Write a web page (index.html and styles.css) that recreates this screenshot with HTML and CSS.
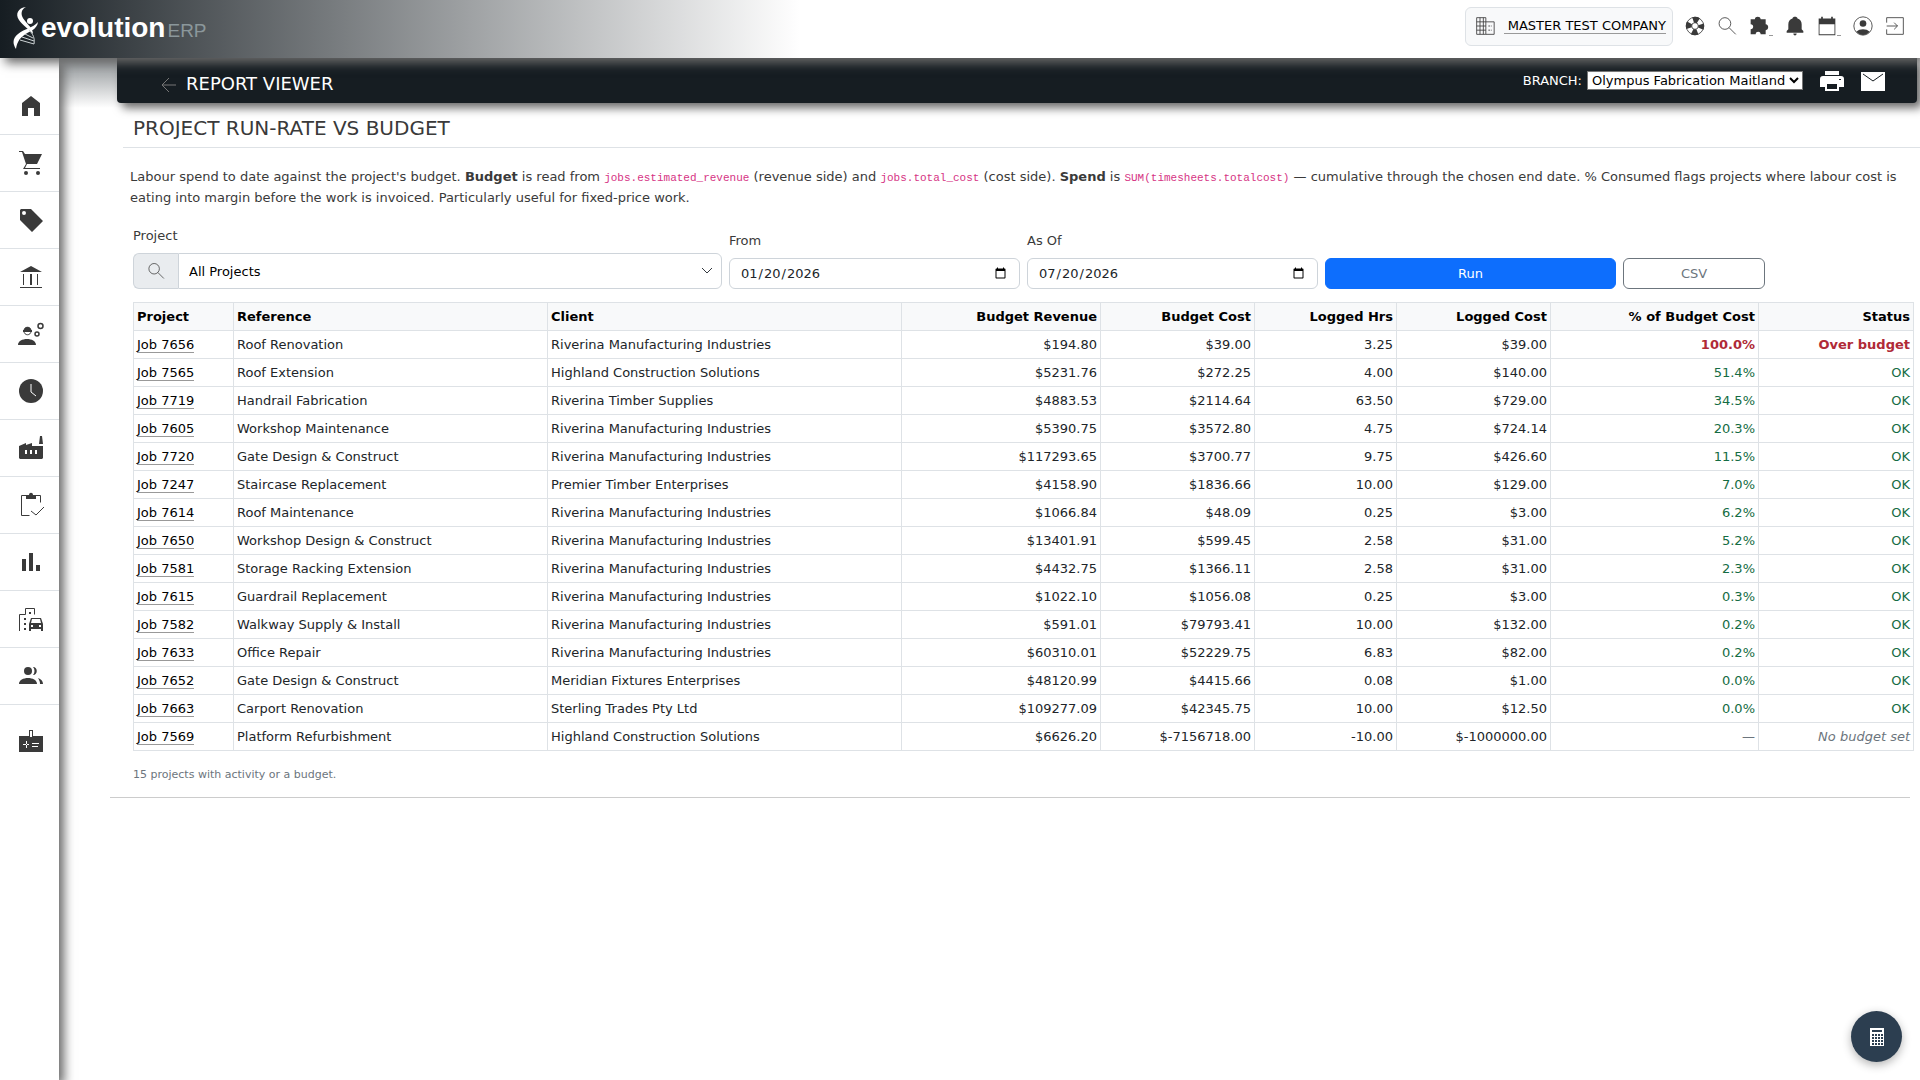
FILE: index.html
```html
<!DOCTYPE html>
<html lang="en">
<head>
  <meta charset="UTF-8">
  <meta name="viewport" content="width=device-width, initial-scale=1.0">
  <title>Project Run-Rate vs Budget - Evolution ERP</title>
  <link rel="stylesheet" href="styles.css">
</head>
<body>

<header class="topbar">
  <a href="#" class="logo" aria-label="Evolution ERP">
    <svg class="logo-mark" viewBox="0 0 26 42" aria-hidden="true">
      <path d="M13 0C5 1 2 7 6 13c3 5 10 9 14 14 0-7-9-12-11-18-1-4 0-7 4-9z" fill="#fff"/>
      <path d="M25 15c-1 8-9 9-15 14-4 3-6 7-7 13C-1 36 0 31 5 27c6-5 15-6 20-12z" fill="#fff"/>
      <circle cx="17" cy="14" r="3" fill="#fff"/>
      <path d="M16 23c4 4 6 8 5 14L7 33M9 30l12 4M12 27l8 4" fill="none" stroke="#ccd2d4" stroke-width="1"/>
    </svg>
    <span class="logo-name">evolution</span><span class="logo-erp">ERP</span>
  </a>
  <nav class="tools">
    <a href="#" class="company">
      <svg viewBox="0 0 24 24"><path d="M2 2h11v20H2zM2 7h11M2 12h11M2 17h11M6 2v20M10 2v20M13 7h10v15H13M16 12h2M19 12h1M16 17h2M19 17h1" fill="none" stroke="#3a3a3a"/></svg>
      <span>&nbsp;MASTER TEST COMPANY</span>
    </a>
    <a href="#" class="tool" aria-label="Help"><svg viewBox="0 0 24 24"><circle cx="12" cy="12" r="7.5" fill="none" stroke="#3a3a3a" stroke-width="7" stroke-dasharray="6.500 5.280" stroke-dashoffset="3.250"/><circle cx="12" cy="12" r="10.5" fill="none" stroke="#3a3a3a"/><circle cx="12" cy="12" r="4" fill="none" stroke="#3a3a3a"/></svg></a>
    <a href="#" class="tool" aria-label="Search"><svg viewBox="0 0 24 24"><circle cx="9.500" cy="9" r="7" fill="none" stroke="#3a3a3a"/><path d="M14.500 14l8 8" stroke="#3a3a3a"/></svg></a>
    <a href="#" class="tool more" aria-label="Plugins"><svg viewBox="0 0 24 24"><path d="M2 4h5c0-4 7-4 7 0h6v6c4 0 4 7 0 7v5h-6c0-4-6-4-6 0H2v-6c4 0 4-6 0-6z"/></svg></a>
    <a href="#" class="tool" aria-label="Notifications"><svg viewBox="0 0 24 24"><path d="M2 20v-2l2-2v-6c0-4 2-6 5-7 0-3 6-3 6 0 3 1 5 3 5 7v6l2 2v2zM10 21h4c0 3-4 3-4 0z"/></svg></a>
    <a href="#" class="tool more" aria-label="Calendar"><svg viewBox="0 0 24 24"><path d="M2 3h3V1h2v2h10V1h2v2h3v20H2zm1 7v12h18V10z" fill-rule="evenodd"/></svg></a>
    <a href="#" class="tool" aria-label="Account"><svg viewBox="0 0 24 24"><circle cx="12" cy="12" r="11" fill="none" stroke="#3a3a3a"/><circle cx="12" cy="9" r="4"/><path d="M4 19c4-4 12-4 16 0-4 5-12 5-16 0z"/></svg></a>
    <a href="#" class="tool" aria-label="Log out"><svg viewBox="0 0 24 24"><path d="M2 8V2h20v20H2v-6M2 12h13M11 8l4 4-4 4" fill="none" stroke="#3a3a3a"/></svg></a>
  </nav>
</header>

<div class="layout">
  <nav class="sidebar">
    <a href="#" aria-label="Home"><svg viewBox="0 0 24 24"><path d="M3 22V9l9-7 9 7v13h-6v-8H9v8z"/></svg></a>
    <a href="#" aria-label="Sales"><svg viewBox="0 0 24 24"><path d="M0 0h4l2 3h17l-5 10H8l-2 4h15v1H4l3-5L3 1H0z"/><circle cx="7" cy="22" r="2"/><circle cx="19" cy="22" r="2"/></svg></a>
    <a href="#" aria-label="Products"><svg viewBox="0 0 24 24"><path d="M2 1h10l12 12-11 11L1 12V2zm3 2a2 2 0 100 4 2 2 0 000-4z" fill-rule="evenodd"/></svg></a>
    <a href="#" aria-label="Accounts"><svg viewBox="0 0 24 24"><path d="M1 7l11-6 11 6zM4 9h1v11H4zM11 9h2v11h-2zM18 9h1v11h-1zM1 22h22v1H1z"/></svg></a>
    <a href="#" aria-label="Workforce"><svg viewBox="0 0 24 24"><path d="M-1 23c0-8 18-8 18 0zM4 8h9v2H4z"/><path d="M5 9c0-5 7-5 7 0M5 9c0 5 7 5 7 0" fill="none" stroke="#3a3a3a"/><path d="M5 8c0-4 7-4 7 0z"/><circle cx="21.500" cy="4" r="2.500" fill="none" stroke="#3a3a3a" stroke-width="1.500"/><circle cx="18" cy="12" r="2" fill="none" stroke="#3a3a3a" stroke-width="1.500"/></svg></a>
    <a href="#" aria-label="Timesheets"><svg viewBox="0 0 24 24"><circle cx="12" cy="12" r="12"/><path d="M12 5v8l5 4" fill="none" stroke="#fff"/></svg></a>
    <a href="#" aria-label="Manufacturing"><svg viewBox="0 0 24 24"><path d="M0 10l7-3v2l6-2v3h11v12l-1 1H1l-1-1zM20 8l1-8h2l1 8zM6 14v4h2v-4zm5 0v4h2v-4zm5 0v4h2v-4z" fill-rule="evenodd"/></svg></a>
    <a href="#" aria-label="Tasks"><svg viewBox="0 0 24 24"><path d="M10.500 22.500h-8v-20h19v7M12 18l5 4 8-8" fill="none" stroke="#3a3a3a"/><path d="M7 2h3c0-3 4-3 4 0h3v4H7z"/></svg></a>
    <a href="#" aria-label="Reports"><svg viewBox="0 0 24 24"><path d="M3 9h4v12H3zM10 3h4v18h-4zM17 15h4v6h-4z"/></svg></a>
    <a href="#" aria-label="Assets"><svg viewBox="0 0 24 24"><path d="M.5 24V7.500h6v-6h9v6" fill="none" stroke="#3a3a3a"/><path d="M5 11h2v2H5zM5 16h2v2H5zM5 21h2v2H5zM10 5h2v2h-2zM12 11h10l2 6v7h-2v-2H12v2h-2v-7zm1 1l-1 4h10l-1-4zM12 18v2h2v-2zm8 0v2h2v-2z" fill-rule="evenodd"/></svg></a>
    <a href="#" aria-label="Contacts"><svg viewBox="0 0 24 24"><circle cx="9" cy="7" r="4"/><path d="M0 20c0-8 18-8 18 0zM14 3c5 0 5 8 0 8 2-2 2-6 0-8zM19 14c3 1 5 3 5 6h-3c0-3-1-4-2-6z"/></svg></a>
    <a href="#" class="last" aria-label="Admin"><svg viewBox="0 0 24 24"><path d="M0 7h10V1h4v6h10v16H0zm11-5v6h2V2zM4 15h6v1H4zm3-3h1v7H7zM13 14h7v1h-7zm0 3h6v1h-6z" fill-rule="evenodd"/></svg></a>
  </nav>

  <main class="page">
    <div class="titlebar">
      <a href="#" class="back" aria-label="Back"><svg viewBox="0 0 16 16"><path d="M15 8H1M8 1L1 8l7 7" fill="none" stroke="currentColor"/></svg></a>
      <h1>REPORT VIEWER</h1>
      <label for="branch">BRANCH:</label>
      <select id="branch"><option>Olympus Fabrication Maitland</option></select>
      <button class="bar-button" aria-label="Print"><svg viewBox="0 0 24 24"><path d="M5 2h14v4H5zM3 7h18c2 0 3 1 3 3v8h-5v4H5v-4H0v-8c0-2 1-3 3-3zm4 8v5h10v-5zm12-5v1h2v-1z" fill-rule="evenodd"/></svg></button>
      <button class="bar-button" aria-label="Email"><svg viewBox="0 0 24 24"><path d="M0 3h24v19H0z"/><path d="M2 5l10 7 10-7" fill="none" stroke="#161d22"/></svg></button>
    </div>

    <h2>PROJECT RUN-RATE VS BUDGET</h2>

    <p class="intro">Labour spend to date against the project's budget. <strong>Budget</strong> is read from <code>jobs.estimated_revenue</code> (revenue side) and <code>jobs.total_cost</code> (cost side). <strong>Spend</strong> is <code>SUM(timesheets.totalcost)</code> — cumulative through the chosen end date. % Consumed flags projects where labour cost is eating into margin before the work is invoiced. Particularly useful for fixed-price work.</p>

    <form class="filters">
      <div class="field wide">
        <label for="project">Project</label>
        <div class="input-group">
          <span class="addon"><svg viewBox="0 0 24 24"><circle cx="9.500" cy="9" r="7" fill="none" stroke="#3a3a3a"/><path d="M14.500 14l8 8" stroke="#3a3a3a"/></svg></span>
          <select id="project"><option>All Projects</option></select>
        </div>
      </div>
      <div class="field">
        <label for="from">From</label>
        <input type="date" id="from" value="2026-01-20">
      </div>
      <div class="field">
        <label for="asof">As Of</label>
        <input type="date" id="asof" value="2026-07-20">
      </div>
      <button type="button" class="btn run">Run</button>
      <button type="button" class="btn csv">CSV</button>
    </form>

    <table class="report">
      <colgroup><col class="c-job"><col class="c-ref"><col class="c-client"><col class="c-rev"><col class="c-cost"><col class="c-hrs"><col class="c-logged"><col class="c-pct"><col class="c-status"></colgroup>
      <thead>
        <tr><th>Project</th><th>Reference</th><th>Client</th><th class="num">Budget Revenue</th><th class="num">Budget Cost</th><th class="num">Logged Hrs</th><th class="num">Logged Cost</th><th class="num">% of Budget Cost</th><th class="num">Status</th></tr>
      </thead>
      <tbody>
        <tr><td><a href="#">Job 7656</a></td><td>Roof Renovation</td><td>Riverina Manufacturing Industries</td><td class="num">$194.80</td><td class="num">$39.00</td><td class="num">3.25</td><td class="num">$39.00</td><td class="num over">100.0%</td><td class="num over">Over budget</td></tr>
        <tr><td><a href="#">Job 7565</a></td><td>Roof Extension</td><td>Highland Construction Solutions</td><td class="num">$5231.76</td><td class="num">$272.25</td><td class="num">4.00</td><td class="num">$140.00</td><td class="num ok">51.4%</td><td class="num ok">OK</td></tr>
        <tr><td><a href="#">Job 7719</a></td><td>Handrail Fabrication</td><td>Riverina Timber Supplies</td><td class="num">$4883.53</td><td class="num">$2114.64</td><td class="num">63.50</td><td class="num">$729.00</td><td class="num ok">34.5%</td><td class="num ok">OK</td></tr>
        <tr><td><a href="#">Job 7605</a></td><td>Workshop Maintenance</td><td>Riverina Manufacturing Industries</td><td class="num">$5390.75</td><td class="num">$3572.80</td><td class="num">4.75</td><td class="num">$724.14</td><td class="num ok">20.3%</td><td class="num ok">OK</td></tr>
        <tr><td><a href="#">Job 7720</a></td><td>Gate Design &amp; Construct</td><td>Riverina Manufacturing Industries</td><td class="num">$117293.65</td><td class="num">$3700.77</td><td class="num">9.75</td><td class="num">$426.60</td><td class="num ok">11.5%</td><td class="num ok">OK</td></tr>
        <tr><td><a href="#">Job 7247</a></td><td>Staircase Replacement</td><td>Premier Timber Enterprises</td><td class="num">$4158.90</td><td class="num">$1836.66</td><td class="num">10.00</td><td class="num">$129.00</td><td class="num ok">7.0%</td><td class="num ok">OK</td></tr>
        <tr><td><a href="#">Job 7614</a></td><td>Roof Maintenance</td><td>Riverina Manufacturing Industries</td><td class="num">$1066.84</td><td class="num">$48.09</td><td class="num">0.25</td><td class="num">$3.00</td><td class="num ok">6.2%</td><td class="num ok">OK</td></tr>
        <tr><td><a href="#">Job 7650</a></td><td>Workshop Design &amp; Construct</td><td>Riverina Manufacturing Industries</td><td class="num">$13401.91</td><td class="num">$599.45</td><td class="num">2.58</td><td class="num">$31.00</td><td class="num ok">5.2%</td><td class="num ok">OK</td></tr>
        <tr><td><a href="#">Job 7581</a></td><td>Storage Racking Extension</td><td>Riverina Manufacturing Industries</td><td class="num">$4432.75</td><td class="num">$1366.11</td><td class="num">2.58</td><td class="num">$31.00</td><td class="num ok">2.3%</td><td class="num ok">OK</td></tr>
        <tr><td><a href="#">Job 7615</a></td><td>Guardrail Replacement</td><td>Riverina Manufacturing Industries</td><td class="num">$1022.10</td><td class="num">$1056.08</td><td class="num">0.25</td><td class="num">$3.00</td><td class="num ok">0.3%</td><td class="num ok">OK</td></tr>
        <tr><td><a href="#">Job 7582</a></td><td>Walkway Supply &amp; Install</td><td>Riverina Manufacturing Industries</td><td class="num">$591.01</td><td class="num">$79793.41</td><td class="num">10.00</td><td class="num">$132.00</td><td class="num ok">0.2%</td><td class="num ok">OK</td></tr>
        <tr><td><a href="#">Job 7633</a></td><td>Office Repair</td><td>Riverina Manufacturing Industries</td><td class="num">$60310.01</td><td class="num">$52229.75</td><td class="num">6.83</td><td class="num">$82.00</td><td class="num ok">0.2%</td><td class="num ok">OK</td></tr>
        <tr><td><a href="#">Job 7652</a></td><td>Gate Design &amp; Construct</td><td>Meridian Fixtures Enterprises</td><td class="num">$48120.99</td><td class="num">$4415.66</td><td class="num">0.08</td><td class="num">$1.00</td><td class="num ok">0.0%</td><td class="num ok">OK</td></tr>
        <tr><td><a href="#">Job 7663</a></td><td>Carport Renovation</td><td>Sterling Trades Pty Ltd</td><td class="num">$109277.09</td><td class="num">$42345.75</td><td class="num">10.00</td><td class="num">$12.50</td><td class="num ok">0.0%</td><td class="num ok">OK</td></tr>
        <tr><td><a href="#">Job 7569</a></td><td>Platform Refurbishment</td><td>Highland Construction Solutions</td><td class="num">$6626.20</td><td class="num">$-7156718.00</td><td class="num">-10.00</td><td class="num">$-1000000.00</td><td class="num none">—</td><td class="num none"><em>No budget set</em></td></tr>
      </tbody>
    </table>

    <p class="count">15 projects with activity or a budget.</p>
    <hr>
  </main>
</div>

<button class="calc" aria-label="Calculator">
  <svg viewBox="0 0 14 18"><path d="M0 0h14v18H0z" fill="#fff"/><path d="M2 2h10v2H2z" fill="#2c3e50"/><path d="M2 7h11M2 10h11M2 13h11M2 16h11" stroke="#2c3e50" stroke-width="2" stroke-dasharray="2 1"/></svg>
</button>

</body>
</html>
```

FILE: styles.css
```css
* {
  box-sizing: border-box;
}
body {
  margin: 0;
  background: #fff;
  color: #3a3a3a;
  font-family: "DejaVu Sans", sans-serif;
  font-size: 13px;
}
svg {
  display: block;
  fill: #3a3a3a;
}

/* top bar */
.topbar {
  position: relative;
  z-index: 3;
  display: flex;
  align-items: center;
  justify-content: space-between;
  height: 58px;
  padding: 0 15px 6px 13px;
  background: linear-gradient(90deg, #161d22 0, #fff 800px);
  box-shadow: 5px 5px 10px #686868;
}
.logo {
  display: flex;
  align-items: center;
  padding-top: 4px;
  color: #fff;
  text-decoration: none;
  font-family: "Liberation Sans", sans-serif;
  font-size: 28px;
}
.logo-mark {
  width: 26px;
  height: 42px;
  margin-right: 2px;
}
.logo-name {
  font-weight: bold;
}
.logo-erp {
  padding: 5px 0 0 2px;
  color: #8b979b;
  font-size: 19px;
}
.tools {
  display: flex;
  align-items: center;
  gap: 12px;
}
.company {
  display: flex;
  align-items: center;
  gap: 9px;
  height: 39px;
  padding: 0 6px 0 9px;
  border: 1px solid #dee2e6;
  border-radius: 6px;
  background: #f8f9fa;
  color: #000;
  text-decoration: none;
}
.company svg,
.tool svg {
  width: 20px;
  height: 20px;
}
.company span {
  border-bottom: 1px solid #999;
}
.tool {
  display: flex;
  align-items: flex-end;
}
.more::after {
  content: "";
  width: 4px;
  border-bottom: 1px solid #999;
}

/* side menu */
.layout {
  display: flex;
}
.sidebar {
  position: relative;
  z-index: 2;
  flex: 0 0 59px;
  min-height: calc(100vh - 58px);
  padding-top: 20px;
  background: #fff;
  box-shadow: 5px 5px 10px #686868;
}
.sidebar a {
  display: flex;
  align-items: center;
  justify-content: center;
  height: 57px;
  padding-left: 3px;
  border-bottom: 1px solid #dee2e6;
}
.sidebar a.last {
  height: 72px;
  border-bottom: 0;
}
.sidebar svg {
  width: 24px;
  height: 24px;
  overflow: visible;
}

/* report page */
.page {
  flex: 1;
  min-width: 0;
  padding: 0 6px 0 74px;
  background: linear-gradient(#8a8f92, #fff) no-repeat 0 0 / 70px 50px;
}
.titlebar {
  display: flex;
  align-items: center;
  height: 45px;
  margin: 0 -3px 0 -16px;
  padding: 0 32px 0 44px;
  border-radius: 0 0 4px 4px;
  background: #161d22;
  box-shadow: 5px 5px 10px #686868;
  color: #fff;
}
.back {
  padding-top: 8px;
  margin-right: 9px;
  color: #777;
}
.back svg {
  width: 16px;
  height: 16px;
}
.titlebar h1 {
  flex: 1;
  margin: 0;
  padding-top: 6px;
  font-size: 18px;
  font-weight: normal;
}
.titlebar select {
  margin-left: 5px;
  border: 1px solid #767676;
  background: #fff;
  color: #000;
  font-family: inherit;
  font-size: 13px;
}
.bar-button {
  padding: 0;
  margin-left: 17px;
  border: 0;
  background: none;
}
.bar-button svg {
  width: 24px;
  height: 24px;
  fill: #fff;
}
h2 {
  margin: 0 -6px 0 -10px;
  padding: 13px 10px 7px;
  border-bottom: 1px solid #dee2e6;
  font-size: 20px;
  font-weight: normal;
  line-height: 24px;
}
.intro {
  margin: 18px 0 18px -3px;
  line-height: 21px;
}
code {
  color: #d63384;
  font-family: "Liberation Mono", monospace;
  font-size: 11px;
  line-height: 1;
}

.filters {
  display: grid;
  grid-template-columns: repeat(12, 1fr);
  align-items: end;
  gap: 7px;
}
.field {
  grid-column: span 2;
}
.field.wide {
  grid-column: span 4;
}
.field label {
  display: block;
  margin-bottom: 7px;
  line-height: 20px;
}
.field input,
.field select {
  display: block;
  width: 100%;
  height: 31px;
  padding: 4px 10px;
  border: 1px solid #ced4da;
  border-radius: 6px;
  background: #fff;
  color: #212529;
  font-family: inherit;
  font-size: 13px;
}
.input-group {
  display: flex;
}
.addon {
  display: flex;
  align-items: center;
  padding: 0 13px;
  border: 1px solid #ced4da;
  border-right: 0;
  border-radius: 6px 0 0 6px;
  background: #e9ecef;
}
.addon svg {
  width: 18px;
  height: 18px;
}
.input-group select {
  flex: 1;
  height: 36px;
  border-radius: 0 6px 6px 0;
  color: #000;
  appearance: none;
  background: #fff url("data:image/svg+xml,%3Csvg xmlns='http://www.w3.org/2000/svg' viewBox='0 0 12 12'%3E%3Cpath d='M1 3l5 5 5-5' fill='none' stroke='%23343a40'/%3E%3C/svg%3E") no-repeat right 8px center / 12px;
}
.btn {
  height: 31px;
  border-radius: 6px;
  font-family: inherit;
  font-size: 13px;
}
.run {
  grid-column: span 2;
  border: 1px solid #0d6efd;
  background: #0d6efd;
  color: #fff;
}
.csv {
  border: 1px solid #6c757d;
  background: #fff;
  color: #6c757d;
}

.report {
  width: 100%;
  margin-top: 13px;
  border-collapse: collapse;
  table-layout: fixed;
  color: #212529;
}
.report th,
.report td {
  height: 28px;
  padding: 0 3px;
  border: 1px solid #dee2e6;
  line-height: 20px;
  text-align: left;
}
.report th {
  background: #f8f9fa;
  color: #000;
}
.report a {
  border-bottom: 1px solid #999;
  color: #000;
  text-decoration: none;
}
.report .num {
  text-align: right;
}
.report .over {
  color: #b02a37;
  font-weight: bold;
}
.report .ok {
  color: #146c43;
}
.report .none {
  color: #6c757d;
}
.c-job { width: 100px; }
.c-ref { width: 314px; }
.c-client { width: 354px; }
.c-rev { width: 199px; }
.c-cost { width: 154px; }
.c-hrs { width: 142px; }
.c-logged { width: 154px; }
.c-pct { width: 208px; }

.count {
  margin: 16px 0 14px;
  color: #6c757d;
  font-size: 11px;
  line-height: 16px;
}
hr {
  margin: 0 4px 0 -23px;
  border: 0;
  border-top: 1px solid #ccc;
}

.calc {
  position: fixed;
  right: 18px;
  bottom: 18px;
  display: flex;
  align-items: center;
  justify-content: center;
  width: 51px;
  height: 51px;
  border: 0;
  border-radius: 50%;
  background: #2c3e50;
  box-shadow: 0 3px 10px rgba(0,0,0,0.3);
}
.calc svg {
  width: 14px;
  height: 18px;
}
```
